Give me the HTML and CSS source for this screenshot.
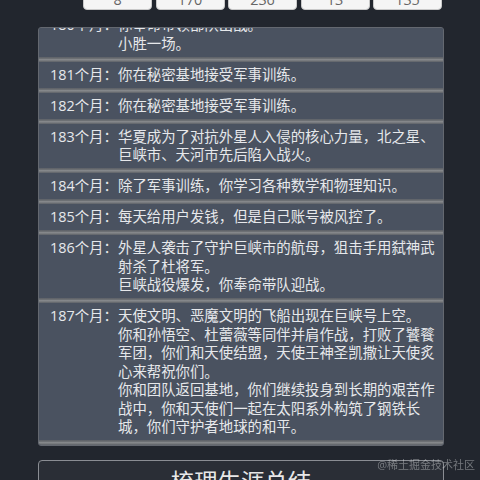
FILE: index.html
```html
<!DOCTYPE html>
<html lang="zh-CN">
<head>
<meta charset="utf-8">
<title>人生模拟</title>
<link rel="stylesheet" href="styles.css">
</head>
<body>
<div class="page">
  <div class="stats">
    <div class="stat">8</div>
    <div class="stat">170</div>
    <div class="stat">236</div>
    <div class="stat">13</div>
    <div class="stat">135</div>
  </div>
  <div class="panel">
    <div class="list">
      <div class="entry"><div class="row"><span class="label">180个月：</span><div class="text">你奉命带领部队出战。<br>小胜一场。</div></div></div>
      <div class="entry"><div class="row"><span class="label">181个月：</span><div class="text">你在秘密基地接受军事训练。</div></div></div>
      <div class="entry"><div class="row"><span class="label">182个月：</span><div class="text">你在秘密基地接受军事训练。</div></div></div>
      <div class="entry"><div class="row"><span class="label">183个月：</span><div class="text">华夏成为了对抗外星人入侵的核心力量，北之星、巨峡市、天河市先后陷入战火。</div></div></div>
      <div class="entry"><div class="row"><span class="label">184个月：</span><div class="text">除了军事训练，你学习各种数学和物理知识。</div></div></div>
      <div class="entry"><div class="row"><span class="label">185个月：</span><div class="text">每天给用户发钱，但是自己账号被风控了。</div></div></div>
      <div class="entry"><div class="row"><span class="label">186个月：</span><div class="text">外星人袭击了守护巨峡市的航母，狙击手用弑神武射杀了杜将军。<br>巨峡战役爆发，你奉命带队迎战。</div></div></div>
      <div class="entry"><div class="row"><span class="label">187个月：</span><div class="text">天使文明、恶魔文明的飞船出现在巨峡号上空。<br>你和孙悟空、杜蕾薇等同伴并肩作战，打败了饕餮军团，你们和天使结盟，天使王神圣凯撒让天使炙心来帮祝你们。<br>你和团队返回基地，你们继续投身到长期的艰苦作战中，你和天使们一起在太阳系外构筑了钢铁长城，你们守护者地球的和平。</div></div></div>
    </div>
  </div>
  <div class="summary">梳理生涯总结</div>
</div>
<div class="watermark">@稀土掘金技术社区</div>
</body>
</html>
```

FILE: styles.css
```css
html, body {
  margin: 0;
  padding: 0;
  height: 100%;
  overflow: hidden;
}
body {
  background: #22262e;
  font-family: "Open Sans", "Noto Sans CJK SC", sans-serif;
  color: #e6e8eb;
}
.page {
  width: 406px;
  margin-left: 38px;
  margin-top: -20px;
}
.stats {
  display: flex;
  justify-content: flex-end;
  gap: 3.5px;
  padding-right: 2px;
}
.stat {
  box-sizing: border-box;
  width: 69px;
  height: 30px;
  background: #f5f5f5;
  border: 1px solid #c9c9c9;
  border-radius: 0 0 4px 4px;
  display: flex;
  align-items: flex-end;
  justify-content: center;
  padding-bottom: 2px;
  font-size: 14.4px;
  line-height: 14px;
  color: #666;
}
.panel {
  box-sizing: border-box;
  margin-top: 17px;
  height: 419px;
  border: 1px solid #646870;
  border-radius: 3px;
  background: #4a5260;
  overflow: hidden;
}
.list {
  margin-top: -16px;
}
.entry::after {
  content: "";
  display: block;
  height: 5px;
  background: linear-gradient(#5b5f66 0%, #6d7074 30%, #8b8d90 55%, #6d7074 80%, #5f636a 100%);
}
.row {
  display: flex;
  padding: 4px 6px 3.5px 11px;
  background: #4a5260;
  font-size: 14.4px;
  line-height: 18.5px;
}
.label {
  flex: 0 0 68px;
  white-space: nowrap;
}
.text {
  flex: 1;
  min-width: 0;
}
.summary {
  box-sizing: border-box;
  margin-top: 14px;
  height: 60px;
  border: 1px solid #8a8d93;
  border-radius: 4px;
  background: #2a2e36;
  text-align: center;
  padding-top: 6px;
  font-size: 23.4px;
  line-height: 30px;
  color: #e8e8e8;
}
.watermark {
  position: fixed;
  right: 5px;
  bottom: 8px;
  font-size: 11px;
  color: rgba(210, 212, 216, 0.45);
}
```
